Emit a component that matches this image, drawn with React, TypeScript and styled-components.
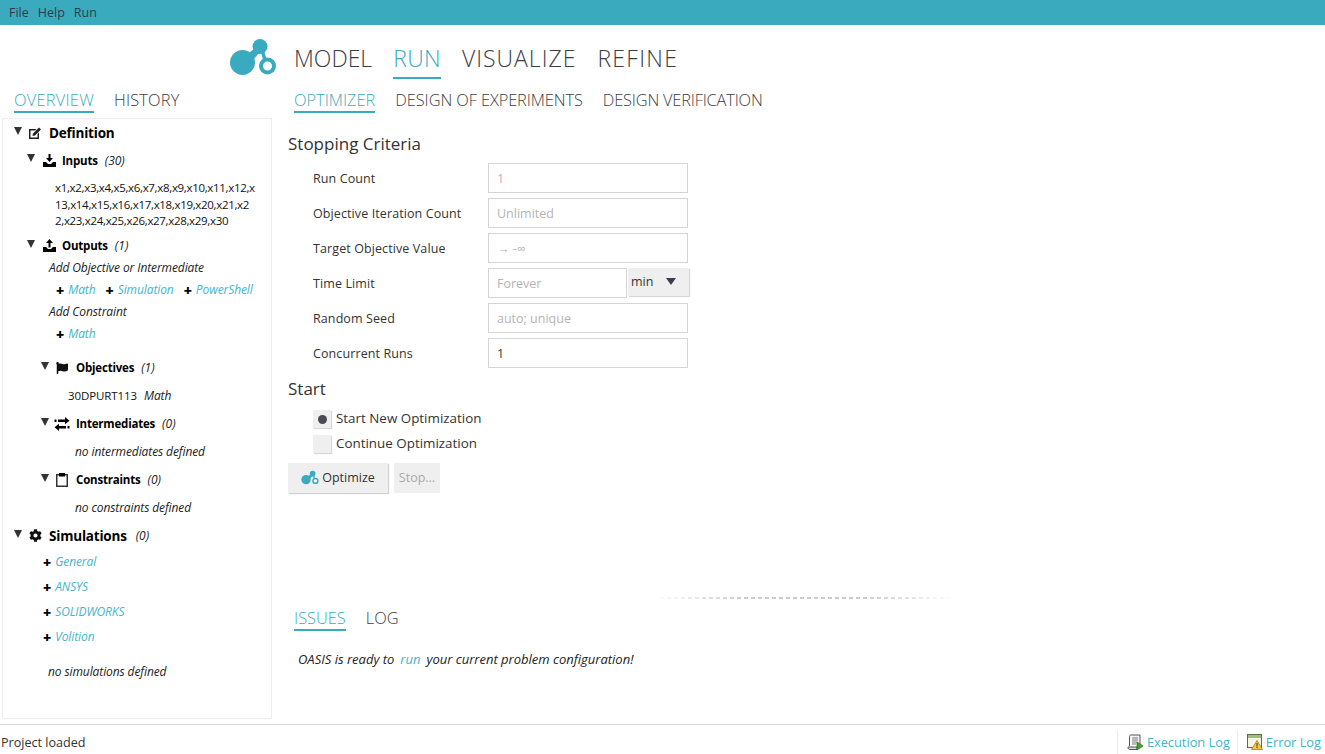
import React from "react";
import styled, { createGlobalStyle } from "styled-components";
import { FaCog, FaFlag } from "react-icons/fa";

const TEAL = "#3aabbe";
const LINK = "#45b4cb";
const BODY = '"Open Sans", "Noto Sans", "Liberation Sans", sans-serif';

const Global = createGlobalStyle`
  html, body { margin: 0; padding: 0; background: #fff; }
  body { font-family: ${BODY}; color: #222; overflow: hidden; }
  * { box-sizing: border-box; }
`;

const Page = styled.div`
  display: flex;
  flex-direction: column;
  height: 754px;
  width: 1325px;
`;

const MenuBar = styled.div`
  height: 25px;
  background: ${TEAL};
  display: flex;
  align-items: center;
  gap: 9px;
  padding-left: 9px;
  flex: none;
`;
const MenuItem = styled.span`
  font-size: 12.5px;
  color: #2c3e46;
`;

const Header = styled.div`
  height: 65px;
  flex: none;
  display: flex;
  align-items: flex-start;
  padding: 13px 0 0 229px;
`;
const LogoMark = styled.svg`
  width: 48px;
  height: 38px;
  flex: none;
`;
const MainTabs = styled.div`
  display: flex;
  gap: 21px;
  margin: 4px 0 0 17px;
`;
const MainTab = styled.div<{ $active?: boolean; $spacing?: number }>`
  font-family: "Open Sans", sans-serif;
  font-weight: 300;
  font-size: 23px;
  line-height: 32px;
  height: 37px;
  letter-spacing: ${(p) => p.$spacing ?? 0}px;
  color: ${(p) => (p.$active ? TEAL : "#3c3c44")};
  border-bottom: 2px solid ${(p) => (p.$active ? TEAL : "transparent")};
`;

const Body = styled.div`
  flex: 1;
  display: flex;
  min-height: 0;
`;
const Side = styled.aside`
  width: 288px;
  flex: none;
  display: flex;
  flex-direction: column;
  padding: 0 16px 5px 2px;
`;

const SubTabs = styled.div<{ $inset: number; $mt?: number }>`
  display: flex;
  gap: 20px;
  height: 23px;
  flex: none;
  padding-left: ${(p) => p.$inset}px;
  margin-top: ${(p) => p.$mt ?? 0}px;
`;
const SubTab = styled.div<{ $active?: boolean; $spacing?: number }>`
  font-family: "Open Sans", sans-serif;
  font-weight: 300;
  font-size: 16.4px;
  line-height: 20px;
  height: 23px;
  white-space: nowrap;
  letter-spacing: ${(p) => p.$spacing ?? 0}px;
  color: ${(p) => (p.$active ? TEAL : "#3c3c44")};
  border-bottom: 2px solid ${(p) => (p.$active ? TEAL : "transparent")};
`;

const Tree = styled.div`
  flex: 1;
  margin-top: 5px;
  border: 1px solid #eeeeee;
  padding-top: 3px;
  font-size: 12px;
`;
const Row = styled.div<{ $indent: number; $mt?: number }>`
  height: 22px;
  display: flex;
  align-items: center;
  white-space: nowrap;
  padding-left: ${(p) => p.$indent}px;
  margin-top: ${(p) => p.$mt ?? 0}px;
`;
const Caret = styled.span`
  width: 0;
  height: 0;
  flex: none;
  border-left: 4.5px solid transparent;
  border-right: 4.5px solid transparent;
  border-top: 8px solid #333;
  margin-top: -4px;
`;
const IconSlot = styled.span<{ $w: number; $ml: number }>`
  width: ${(p) => p.$w}px;
  margin-left: ${(p) => p.$ml}px;
  height: 16px;
  flex: none;
  display: flex;
  align-items: center;
  justify-content: center;
  color: #111;
`;
const Title = styled.span<{ $big?: boolean; $ml: number }>`
  font-weight: 700;
  color: #000;
  font-size: ${(p) => (p.$big ? 13.5 : 11.5)}px;
  margin-left: ${(p) => p.$ml}px;
  letter-spacing: -0.2px;
`;
const Count = styled.em<{ $ml: number }>`
  font-style: italic;
  font-size: 12px;
  margin-left: ${(p) => p.$ml}px;
  color: #222;
`;
const Note = styled.em<{ $ml?: number }>`
  font-style: italic;
  font-size: 12px;
  letter-spacing: -0.1px;
  padding-bottom: 2px;
  margin-left: ${(p) => p.$ml ?? 0}px;
  color: #222;
`;
const Plain = styled.span`
  font-size: 11.5px;
  letter-spacing: -0.1px;
  padding-bottom: 2px;
  color: #111;
`;
const VarList = styled.div`
  width: 201px;
  margin: 9px 0 0 52px;
  font-size: 11.5px;
  line-height: 16.5px;
  letter-spacing: -0.32px;
  word-break: break-all;
  color: #111;
`;
const Plus = styled.span<{ $ml?: number }>`
  font-weight: 800;
  font-size: 14px;
  line-height: 14px;
  color: #000;
  margin-left: ${(p) => p.$ml ?? 0}px;
  margin-right: 4px;
`;
const Link = styled.em`
  font-style: italic;
  font-size: 12px;
  letter-spacing: -0.1px;
  padding-bottom: 2px;
  color: ${LINK};
`;

const Main = styled.main`
  flex: 1;
  min-width: 0;
  display: flex;
  flex-direction: column;
`;
const Upper = styled.div`
  flex: 1;
  display: flex;
  flex-direction: column;
  align-items: flex-start;
  min-height: 0;
`;
const SectionHead = styled.h2<{ $mt: number }>`
  margin: ${(p) => p.$mt}px 0 0 0;
  font-weight: 400;
  font-size: 17px;
  line-height: 24px;
  color: #333;
`;
const Form = styled.div`
  display: flex;
  flex-direction: column;
  gap: 5px;
  margin: 7px 0 0 25px;
`;
const FormRow = styled.div`
  display: flex;
  align-items: center;
  height: 30px;
`;
const Label = styled.label`
  width: 175px;
  font-size: 12.5px;
  letter-spacing: 0.1px;
  color: #333;
`;
const Field = styled.div<{ $w?: number; $filled?: boolean }>`
  width: ${(p) => p.$w ?? 200}px;
  height: 30px;
  border: 1px solid #d5d5d5;
  padding-left: 8px;
  font-size: 12.5px;
  line-height: 30px;
  color: ${(p) => (p.$filled ? "#333" : "#b4b4b4")};
`;
const UnitSelect = styled.div`
  width: 61px;
  height: 28px;
  margin: -2px 0 0 1px;
  background: #efefef;
  box-shadow: 1px 1px 1px #d8d8d8;
  display: flex;
  align-items: center;
  justify-content: space-between;
  padding: 0 13px 2px 3px;
  font-size: 12.5px;
  color: #333;
`;
const UnitCaret = styled.span`
  width: 0;
  height: 0;
  border-left: 5px solid transparent;
  border-right: 5px solid transparent;
  border-top: 7px solid #3c3c4c;
`;
const RadioList = styled.div`
  display: flex;
  flex-direction: column;
  gap: 7px;
  margin: 9px 0 0 25px;
`;
const RadioRow = styled.div`
  display: flex;
  align-items: center;
  gap: 5px;
  height: 18px;
  font-size: 13.4px;
  color: #333;
`;
const RadioText = styled.span`
  padding-bottom: 2px;
`;
const RadioBox = styled.span<{ $on?: boolean }>`
  width: 18px;
  height: 18px;
  background: #efefef;
  box-shadow: 1px 1px 1px #d8d8d8;
  display: flex;
  align-items: center;
  justify-content: center;
  &::after {
    content: "";
    display: ${(p) => (p.$on ? "block" : "none")};
    width: 9px;
    height: 9px;
    border-radius: 50%;
    background: #4a4a52;
  }
`;
const Buttons = styled.div`
  display: flex;
  gap: 6px;
  margin-top: 10px;
`;
const Button = styled.div`
  width: 100px;
  height: 30px;
  background: #efefef;
  box-shadow: 1px 1px 1px #d0d0d0;
  display: flex;
  align-items: center;
  justify-content: center;
  gap: 3px;
  padding-bottom: 2px;
  font-size: 12.5px;
  color: #333;
`;
const DisabledButton = styled.div`
  width: 46px;
  height: 30px;
  background: #efefef;
  display: flex;
  align-items: center;
  justify-content: center;
  padding-bottom: 2px;
  font-size: 12.5px;
  color: #aaa;
`;

const Bottom = styled.div`
  height: 127px;
  flex: none;
  display: flex;
  flex-direction: column;
`;
const Splitter = styled.div`
  height: 2px;
  width: 304px;
  margin: 0 0 0 365px;
  flex: none;
  background:
    linear-gradient(90deg, #fff 0%, rgba(255, 255, 255, 0) 30%, rgba(255, 255, 255, 0) 70%, #fff 100%),
    repeating-linear-gradient(90deg, #cccccc 0 4px, transparent 4px 7px);
`;
const Message = styled.p`
  margin: 19px 0 0 10px;
  font-style: italic;
  font-size: 13px;
  color: #222;
  white-space: nowrap;
`;
const InlineLink = styled.span`
  color: ${LINK};
  margin: 0 6px;
`;

const Status = styled.footer`
  height: 30px;
  flex: none;
  border-top: 1px solid #d6d6d6;
  display: flex;
  align-items: center;
  justify-content: space-between;
  padding: 5px 4px 0 1px;
`;
const StatusText = styled.span`
  font-size: 12.6px;
  color: #333;
`;
const StatusLinks = styled.div`
  display: flex;
  align-items: center;
  height: 24px;
`;
const StatusLink = styled.div`
  display: flex;
  align-items: center;
  gap: 3px;
  height: 100%;
  padding: 0 7px 0 9px;
  border-left: 1px solid #eaeaea;
  font-size: 12.8px;
  color: ${LINK};
  &:last-child { padding-right: 0; }
`;

const Logo = ({ small }: { small?: boolean }) => (
  <LogoMark
    viewBox="0 0 48 38"
    style={small ? { width: 18, height: 15 } : undefined}
    aria-hidden
  >
    <g fill={TEAL}>
      <circle cx="13.5" cy="24.5" r="12.5" />
      <circle cx="31" cy="8.5" r="7.5" />
      <path d="M20 15 L27 9 L31 14 L24 22 Z" />
    </g>
    <line x1="33" y1="12" x2="36" y2="22" stroke={TEAL} strokeWidth="3.5" />
    <circle cx="38.5" cy="28" r="6.5" fill="#fff" stroke={TEAL} strokeWidth="4" />
  </LogoMark>
);

const EditIcon = () => (
  <svg width="14" height="14" viewBox="0 0 14 14" aria-hidden>
    <path d="M1 3h7.500L7 4.500H2.500v7h7V8L11 6.500V13H1z" fill="#222" />
    <path d="M5 7.500 11 1.500l2 2-6 6-2.500.5z" fill="#222" />
  </svg>
);
const TrayIn = () => (
  <svg width="13" height="13" viewBox="0 0 13 13" aria-hidden>
    <path d="M5.500 0h2v4H10L6.500 8 3 4h2.500z" fill="#000" />
    <path d="M0 8h3l2 2h3l2-2h3v5H0z" fill="#000" />
  </svg>
);
const TrayOut = () => (
  <svg width="13" height="13" viewBox="0 0 13 13" aria-hidden>
    <path d="M6.500 0 10 4H7.500v4.500h-2V4H3z" fill="#000" />
    <path d="M0 8h3l2 2h3l2-2h3v5H0z" fill="#000" />
  </svg>
);
const Transfer = () => (
  <svg width="16" height="14" viewBox="0 0 16 14" aria-hidden>
    <path d="M4 2.500h7V0l4.500 3.700L11 7.200V5H4z" fill="#000" />
    <path d="M12 9H5V6.800L.5 10.300 5 14v-2.500h7z" fill="#000" />
    <rect x="0.500" y="2.500" width="2" height="2.500" fill="#000" />
    <rect x="13.500" y="9" width="2" height="2.500" fill="#000" />
  </svg>
);
const Clipboard = () => (
  <svg width="12" height="14" viewBox="0 0 12 14" aria-hidden>
    <rect x="0.750" y="1.750" width="10.500" height="11.500" fill="none" stroke="#333" strokeWidth="1.500" />
    <rect x="3" y="0" width="6" height="3.500" fill="#000" />
  </svg>
);
const ScrollIcon = () => (
  <svg width="17" height="17" viewBox="0 0 17 17" aria-hidden>
    <path d="M4 1h9v9M4 1c-1 0-1.500.7-1.500 1.500V12" fill="#f2f2f2" stroke="#555" />
    <path d="M1 13h9v2.500H2.500C1.600 15.500 1 14.500 1 13z" fill="#ddd" stroke="#555" />
    <path d="M5 4h6M5 6h6M5 8h5M5 10h4" stroke="#777" strokeWidth="1" />
    <path d="M10 8v8l6-4z" fill="#3ba52e" stroke="#1d6e1a" strokeWidth="0.700" />
  </svg>
);
const ErrorIcon = () => (
  <svg width="16" height="16" viewBox="0 0 16 16" aria-hidden>
    <rect x="0.500" y="0.500" width="14" height="13" fill="#f4f6ea" stroke="#58703c" />
    <rect x="1" y="1" width="13" height="3" fill="#a3bb7e" />
    <path d="M10 6.500l5.500 9h-11z" fill="#f5c842" stroke="#a87a1a" strokeWidth="0.800" />
    <rect x="9.500" y="9" width="1" height="3.500" fill="#333" />
    <rect x="9.500" y="13" width="1" height="1" fill="#333" />
  </svg>
);

const formRows = [
  { label: "Run Count", value: "1" },
  { label: "Objective Iteration Count", value: "Unlimited" },
  { label: "Target Objective Value", value: "→ -∞" },
];

const App = () => (
  <Page>
    <Global />
    <MenuBar>
      <MenuItem>File</MenuItem>
      <MenuItem>Help</MenuItem>
      <MenuItem>Run</MenuItem>
    </MenuBar>
    <Header>
      <Logo />
      <MainTabs>
        <MainTab>MODEL</MainTab>
        <MainTab $active $spacing={0.3}>RUN</MainTab>
        <MainTab $spacing={1}>VISUALIZE</MainTab>
        <MainTab $spacing={1.3}>REFINE</MainTab>
      </MainTabs>
    </Header>
    <Body>
      <Side>
        <SubTabs $inset={12}>
          <SubTab $active $spacing={0.25}>OVERVIEW</SubTab>
          <SubTab $spacing={0.15}>HISTORY</SubTab>
        </SubTabs>
        <Tree>
          <Row $indent={11}>
            <Caret />
            <IconSlot $w={14} $ml={6}><EditIcon /></IconSlot>
            <Title $big $ml={7}>Definition</Title>
          </Row>
          <Row $indent={24} $mt={5}>
            <Caret />
            <IconSlot $w={14} $ml={7}><TrayIn /></IconSlot>
            <Title $ml={6}>Inputs</Title>
            <Count $ml={7}>(30)</Count>
          </Row>
          <VarList>
            x1,x2,x3,x4,x5,x6,x7,x8,x9,x10,x11,x12,x13,x14,x15,x16,x17,x18,x19,x20,x21,x22,x23,x24,x25,x26,x27,x28,x29,x30
          </VarList>
          <Row $indent={24} $mt={5}>
            <Caret />
            <IconSlot $w={14} $ml={7}><TrayOut /></IconSlot>
            <Title $ml={6}>Outputs</Title>
            <Count $ml={7}>(1)</Count>
          </Row>
          <Row $indent={46} $mt={1}><Note>Add Objective or Intermediate</Note></Row>
          <Row $indent={53}>
            <Plus>+</Plus><Link>Math</Link>
            <Plus $ml={10}>+</Plus><Link>Simulation</Link>
            <Plus $ml={10}>+</Plus><Link>PowerShell</Link>
          </Row>
          <Row $indent={46}><Note>Add Constraint</Note></Row>
          <Row $indent={53}><Plus>+</Plus><Link>Math</Link></Row>
          <Row $indent={38} $mt={11}>
            <Caret />
            <IconSlot $w={14} $ml={6}><FaFlag size={12} /></IconSlot>
            <Title $ml={7}>Objectives</Title>
            <Count $ml={7}>(1)</Count>
          </Row>
          <Row $indent={65} $mt={7}>
            <Plain>30DPURT113</Plain>
            <Note $ml={7}>Math</Note>
          </Row>
          <Row $indent={38} $mt={5}>
            <Caret />
            <IconSlot $w={16} $ml={5}><Transfer /></IconSlot>
            <Title $ml={6}>Intermediates</Title>
            <Count $ml={7}>(0)</Count>
          </Row>
          <Row $indent={72} $mt={7}><Note>no intermediates defined</Note></Row>
          <Row $indent={38} $mt={5}>
            <Caret />
            <IconSlot $w={14} $ml={6}><Clipboard /></IconSlot>
            <Title $ml={7}>Constraints</Title>
            <Count $ml={7}>(0)</Count>
          </Row>
          <Row $indent={72} $mt={7}><Note>no constraints defined</Note></Row>
          <Row $indent={11} $mt={5}>
            <Caret />
            <IconSlot $w={14} $ml={6}><FaCog size={13} /></IconSlot>
            <Title $big $ml={7}>Simulations</Title>
            <Count $ml={9}>(0)</Count>
          </Row>
          <Row $indent={40} $mt={5}><Plus>+</Plus><Link>General</Link></Row>
          <Row $indent={40} $mt={3}><Plus>+</Plus><Link>ANSYS</Link></Row>
          <Row $indent={40} $mt={3}><Plus>+</Plus><Link>SOLIDWORKS</Link></Row>
          <Row $indent={40} $mt={3}><Plus>+</Plus><Link>Volition</Link></Row>
          <Row $indent={45} $mt={13}><Note>no simulations defined</Note></Row>
        </Tree>
      </Side>
      <Main>
        <Upper>
          <SubTabs $inset={6}>
            <SubTab $active>OPTIMIZER</SubTab>
            <SubTab $spacing={-0.1}>DESIGN OF EXPERIMENTS</SubTab>
            <SubTab $spacing={-0.2}>DESIGN VERIFICATION</SubTab>
          </SubTabs>
          <SectionHead $mt={19}>Stopping Criteria</SectionHead>
          <Form>
            {formRows.map((r) => (
              <FormRow key={r.label}>
                <Label>{r.label}</Label>
                <Field>{r.value}</Field>
              </FormRow>
            ))}
            <FormRow>
              <Label>Time Limit</Label>
              <Field $w={139}>Forever</Field>
              <UnitSelect>min<UnitCaret /></UnitSelect>
            </FormRow>
            <FormRow>
              <Label>Random Seed</Label>
              <Field>auto; unique</Field>
            </FormRow>
            <FormRow>
              <Label>Concurrent Runs</Label>
              <Field $filled>1</Field>
            </FormRow>
          </Form>
          <SectionHead $mt={9}>Start</SectionHead>
          <RadioList>
            <RadioRow><RadioBox $on /><RadioText>Start New Optimization</RadioText></RadioRow>
            <RadioRow><RadioBox /><RadioText>Continue Optimization</RadioText></RadioRow>
          </RadioList>
          <Buttons>
            <Button><Logo small />Optimize</Button>
            <DisabledButton>Stop...</DisabledButton>
          </Buttons>
        </Upper>
        <Bottom>
          <Splitter />
          <SubTabs $inset={6} $mt={9}>
            <SubTab $active>ISSUES</SubTab>
            <SubTab>LOG</SubTab>
          </SubTabs>
          <Message>
            OASIS is ready to<InlineLink>run</InlineLink>your current problem configuration!
          </Message>
        </Bottom>
      </Main>
    </Body>
    <Status>
      <StatusText>Project loaded</StatusText>
      <StatusLinks>
        <StatusLink><ScrollIcon />Execution Log</StatusLink>
        <StatusLink><ErrorIcon />Error Log</StatusLink>
      </StatusLinks>
    </Status>
  </Page>
);

export default App;
